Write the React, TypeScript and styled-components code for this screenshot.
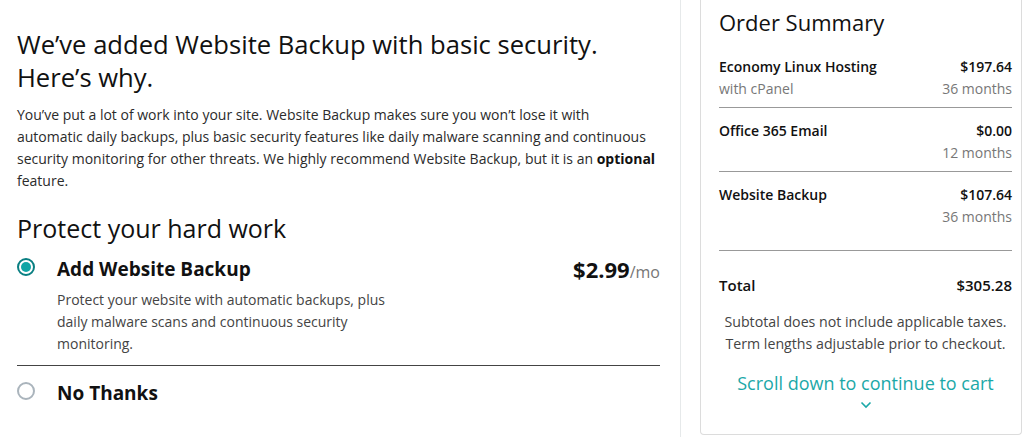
import React from "react";
import styled, { createGlobalStyle } from "styled-components";

const GlobalStyle = createGlobalStyle`
  body {
    margin: 0;
    background: #fff;
    font-family: "Open Sans", "Noto Sans", sans-serif;
    color: #111;
  }
`;

const Page = styled.div`
  display: flex;
  height: 437px;
  overflow: hidden;
`;

const Main = styled.div`
  width: 663px;
  padding-left: 17px;
  border-right: 1px solid #e6e9ea;
`;

const Heading = styled.h1`
  margin: 28px 0 10px;
  font-size: 25.6px;
  line-height: 33px;
  font-weight: 400;
  color: #111;
`;

const Intro = styled.p`
  margin: 0;
  width: 663px;
  font-size: 14px;
  line-height: 22px;
  color: #2b2b2b;
  b {
    color: #111;
  }
`;

const SubHeading = styled.h2`
  margin: 20px 0 13px;
  font-size: 25px;
  line-height: 32px;
  font-weight: 400;
`;

const Option = styled.div<{ $divider?: boolean }>`
  display: grid;
  grid-template-columns: 40px 1fr auto;
  width: 643px;
  padding-bottom: ${(p) => (p.$divider ? "10px" : "0")};
  margin-bottom: ${(p) => (p.$divider ? "15px" : "0")};
  border-bottom: ${(p) => (p.$divider ? "1px solid #444" : "none")};
`;

const Radio = styled.span<{ $checked?: boolean }>`
  width: 18px;
  height: 18px;
  margin-top: 1px;
  box-sizing: border-box;
  border-radius: 50%;
  border: 2px solid ${(p) => (p.$checked ? "#0a7f82" : "#aab4bc")};
  display: flex;
  align-items: center;
  justify-content: center;
  &::after {
    content: "";
    display: ${(p) => (p.$checked ? "block" : "none")};
    width: 10px;
    height: 10px;
    border-radius: 50%;
    background: #10a5a5;
  }
`;

const OptionTitle = styled.div`
  font-size: 19px;
  line-height: 24px;
  font-weight: 700;
  color: #111;
`;

const OptionText = styled.p`
  grid-column: 2;
  margin: 5px 0 0;
  max-width: 340px;
  font-size: 14px;
  line-height: 22px;
  color: #444;
`;

const Price = styled.div`
  font-size: 22px;
  line-height: 24px;
  font-weight: 700;
  span {
    font-size: 16px;
    font-weight: 400;
    color: #767676;
  }
`;

const Side = styled.div`
  padding-left: 19px;
`;

const Card = styled.div`
  width: 293px;
  height: 427px;
  padding: 7px 9px 0 18px;
  border: 1px solid #dcdcdc;
  border-top: none;
  border-radius: 0 0 4px 4px;
`;

const CardTitle = styled.h2`
  margin: 0 0 19px;
  font-size: 22px;
  line-height: 30px;
  font-weight: 400;
  color: #111;
`;

const Item = styled.div<{ $last?: boolean }>`
  display: grid;
  grid-template-columns: 1fr auto;
  padding: ${(p) => (p.$last ? "12px 0 22px" : "12px 0 7px")};
  border-bottom: 1px solid #999;
  font-size: 14px;
  line-height: 22px;
  &:first-of-type {
    padding-top: 0;
  }
`;

const ItemName = styled.div`
  font-weight: 600;
  color: #111;
`;

const ItemPrice = styled.div`
  font-weight: 600;
  text-align: right;
  color: #111;
`;

const ItemSub = styled.div<{ $right?: boolean }>`
  grid-column: ${(p) => (p.$right ? 2 : 1)};
  text-align: ${(p) => (p.$right ? "right" : "left")};
  color: #777;
`;

const Total = styled.div`
  display: flex;
  justify-content: space-between;
  margin-top: 23px;
  font-size: 15px;
  line-height: 22px;
  font-weight: 600;
`;

const Note = styled.p`
  margin: 15px 0 0;
  text-align: center;
  font-size: 14.2px;
  line-height: 22px;
  color: #444;
`;

const Scroll = styled.div`
  margin-top: 17px;
  display: flex;
  flex-direction: column;
  align-items: center;
  color: #1ba8a8;
  font-size: 18px;
  line-height: 22px;
  svg {
    margin-top: 7px;
  }
`;

function App() {
  return (
    <Page>
      <GlobalStyle />
      <Main>
        <Heading>
          We’ve added Website Backup with basic security.
          <br />
          Here’s why.
        </Heading>
        <Intro>
          You’ve put a lot of work into your site. Website Backup makes sure you won’t lose it with
          <br />
          automatic daily backups, plus basic security features like daily malware scanning and
          continuous
          <br />
          security monitoring for other threats. We highly recommend Website Backup, but it is an{" "}
          <b>optional</b>
          <br />
          feature.
        </Intro>
        <SubHeading>Protect your hard work</SubHeading>
        <Option $divider>
          <Radio $checked />
          <OptionTitle>Add Website Backup</OptionTitle>
          <Price>
            $2.99<span>/mo</span>
          </Price>
          <OptionText>
            Protect your website with automatic backups, plus daily malware scans and continuous
            security monitoring.
          </OptionText>
        </Option>
        <Option>
          <Radio />
          <OptionTitle>No Thanks</OptionTitle>
        </Option>
      </Main>
      <Side>
        <Card>
          <CardTitle>Order Summary</CardTitle>
          <Item>
            <ItemName>Economy Linux Hosting</ItemName>
            <ItemPrice>$197.64</ItemPrice>
            <ItemSub>with cPanel</ItemSub>
            <ItemSub $right>36 months</ItemSub>
          </Item>
          <Item>
            <ItemName>Office 365 Email</ItemName>
            <ItemPrice>$0.00</ItemPrice>
            <ItemSub $right>12 months</ItemSub>
          </Item>
          <Item $last>
            <ItemName>Website Backup</ItemName>
            <ItemPrice>$107.64</ItemPrice>
            <ItemSub $right>36 months</ItemSub>
          </Item>
          <Total>
            <span>Total</span>
            <span>$305.28</span>
          </Total>
          <Note>
            Subtotal does not include applicable taxes.
            <br />
            Term lengths adjustable prior to checkout.
          </Note>
          <Scroll>
            Scroll down to continue to cart
            <svg width="12" height="8" viewBox="0 0 12 8">
              <path d="M1.5 1.5 L6 6 L10.5 1.5" fill="none" stroke="#1ba8a8" strokeWidth="1.6" />
            </svg>
          </Scroll>
        </Card>
      </Side>
    </Page>
  );
}

export default App;
